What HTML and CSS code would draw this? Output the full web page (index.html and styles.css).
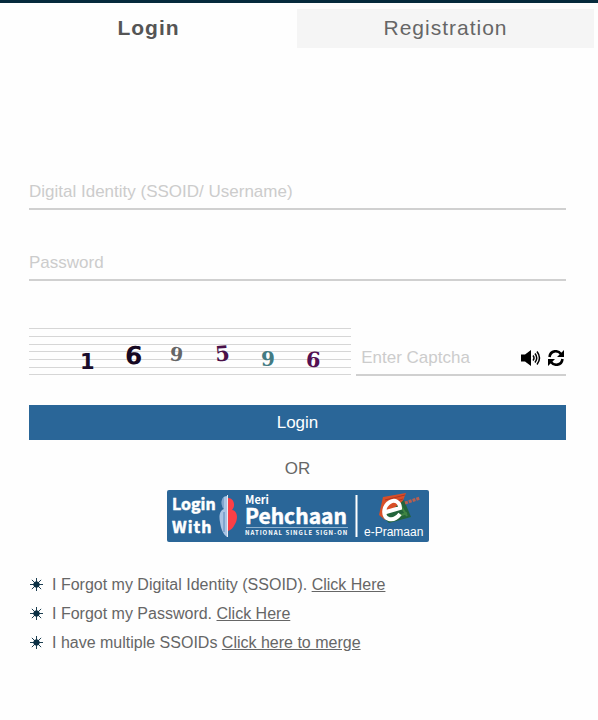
FILE: index.html
```html
<!DOCTYPE html>
<html lang="en">
<head>
  <meta charset="UTF-8">
  <meta name="viewport" content="width=device-width, initial-scale=1.0">
  <title>Login</title>
  <link rel="stylesheet" href="styles.css">
</head>
<body>
  <div class="tabs" role="tablist">
    <button type="button" class="tab active" role="tab" aria-selected="true">Login</button>
    <button type="button" class="tab" role="tab" aria-selected="false">Registration</button>
  </div>

  <main class="content">
    <form class="login-form">
      <input class="field" type="text" name="username" aria-label="Digital Identity (SSOID/ Username)" placeholder="Digital Identity (SSOID/ Username)">
      <input class="field" type="password" name="password" aria-label="Password" placeholder="Password">

      <div class="captcha-row">
        <svg class="captcha" viewBox="0 0 322 48" role="img" aria-label="Captcha">
          <path d="M0 .5H322M0 8.500H322M0 16.500H322M0 23.500H322M0 31.500H322M0 39.500H322M0 46.500H322" stroke="#d6d6d6"/>
          <g font-weight="bold">
            <text x="51" y="41" font-family="DejaVu Sans, sans-serif" font-size="21" fill="#1a0d2b">1</text>
            <text x="96" y="36" font-family="DejaVu Sans, sans-serif" font-size="25" fill="#160822" transform="rotate(4 104 28)">6</text>
            <text x="141" y="33" font-family="DejaVu Serif, serif" font-size="19" fill="#666" transform="rotate(6 148 25)">9</text>
            <text x="186" y="33" font-family="DejaVu Serif, serif" font-size="21" fill="#4a1048" transform="rotate(-5 193 25)">5</text>
            <text x="232" y="38" font-family="DejaVu Serif, serif" font-size="20" fill="#437b83">9</text>
            <text x="277" y="39" font-family="DejaVu Serif, serif" font-size="21" fill="#541052" transform="rotate(4 284 30)">6</text>
          </g>
        </svg>
        <div class="captcha-entry">
          <input class="captcha-input" type="text" name="captcha" aria-label="Enter Captcha" placeholder="Enter Captcha">
          <button type="button" class="icon-btn" aria-label="Play captcha audio">
            <svg width="20" height="16" viewBox="0 0 20 16">
              <path d="M0 4.500h4L10 0v16l-6-4.500H0z"/>
              <path d="M12 5.500q2 2.500 0 5M14 3.500q3.500 4.500 0 9M16 1.500q5 6.500 0 13" fill="none" stroke="#000" stroke-width="1.500"/>
            </svg>
          </button>
          <button type="button" class="icon-btn" aria-label="Refresh captcha">
            <svg width="16" height="16" viewBox="0 0 16 16">
              <path d="M1.500 7C2.500 0 10 0 13 4M14.500 9C13.500 16 6 16 3 12" fill="none" stroke="#000" stroke-width="2.600"/>
              <path d="M16 0v7H9zM0 16V9h7z"/>
            </svg>
          </button>
        </div>
      </div>

      <button type="submit" class="login-btn">Login</button>
    </form>

    <p class="or">OR</p>

    <a class="pehchaan" href="#" aria-label="Login with Meri Pehchaan, e-Pramaan">
      <svg width="262" height="52" viewBox="0 0 262 52">
        <rect width="262" height="52" rx="2" fill="#2a6698"/>
        <g fill="#fff" font-family="Noto Sans CJK JP, sans-serif" font-weight="bold">
          <g stroke="#fff" stroke-width=".5">
            <text x="5" y="20" font-size="16">Login</text>
            <text x="5" y="43" font-size="16" letter-spacing="1">With</text>
            <text x="78" y="34" font-size="21">Pehchaan</text>
          </g>
          <text x="78" y="14" font-size="11">Meri</text>
          <text x="78" y="45" font-size="6" letter-spacing="1">NATIONAL SINGLE SIGN-ON</text>
        </g>
        <path d="M79 37.500H181" stroke="#8eb2cf"/>
        <path d="M60 6c-6 0-7 9-3 13-5 2-5 8-4 13 1 7 3 12 7 15z" fill="#a9c4e4"/>
        <path d="M56 8v10M57 22v20" stroke="#5b86b9"/>
        <path d="M61 8c6 0 8 8 4 12 6 1 6 9 3 14-2 4-4 6-7 7z" fill="#fb3f46"/>
        <path d="M60.500 5V47" stroke="#e5ebf4"/>
        <path d="M189.500 5V47" stroke="#fff" stroke-width="2"/>
        <path d="M216 7l23-4-4 10-17 17-6-5z" fill="#d84f28"/>
        <path d="M237 10l7 17-22 6-6-6z" fill="#23643b"/>
        <path d="M218 10l20-5M222 13l14-4" stroke="#ad3524"/>
        <path d="M226 28l14-5M234 16l6 10" stroke="#408443" stroke-width="2"/>
        <path d="M238 13l15-5" stroke="#b95f50" stroke-width="3" stroke-dasharray="3 1"/>
        <path d="M219 22l14-4c0-6-5-9-10-6-7 4-8 15-1 17 4 1 8-1 11-5" fill="none" stroke="#fff" stroke-width="4"/>
        <text x="197" y="46" fill="#fff" font-family="Liberation Sans, Arial, sans-serif" font-size="12">e-Pramaan</text>
      </svg>
    </a>

    <ul class="help">
      <li><svg class="bullet" viewBox="0 0 14 14"><path d="M7 0v14M0 7h14M2 2l10 10M12 2L2 12"/><circle cx="7" cy="7" r="3"/></svg><span>I Forgot my Digital Identity (SSOID). <a href="#">Click Here</a></span></li>
      <li><svg class="bullet" viewBox="0 0 14 14"><path d="M7 0v14M0 7h14M2 2l10 10M12 2L2 12"/><circle cx="7" cy="7" r="3"/></svg><span>I Forgot my Password. <a href="#">Click Here</a></span></li>
      <li><svg class="bullet" viewBox="0 0 14 14"><path d="M7 0v14M0 7h14M2 2l10 10M12 2L2 12"/><circle cx="7" cy="7" r="3"/></svg><span>I have multiple SSOIDs <a href="#">Click here to merge</a></span></li>
    </ul>
  </main>
</body>
</html>
```
FILE: styles.css
```css
* {
  box-sizing: border-box;
}
body {
  margin: 0;
  border-top: 3px solid #062a3c;
  background: #fefefe;
  color: #666;
  font-family: "Liberation Sans", Arial, sans-serif;
  font-size: 16px;
}
button, input {
  font-family: inherit;
  border: none;
  border-radius: 0;
  outline: none;
}
.tabs {
  display: flex;
  padding: 6px 4px 0 0;
}
.tab {
  flex: 1;
  height: 39px;
  padding: 0 0 1px;
  background: transparent;
  color: #666;
  font-size: 21px;
  letter-spacing: 1px;
  cursor: pointer;
}
.tab:not(.active) {
  background: #f5f5f5;
}
.tab.active {
  color: #555;
  font-weight: bold;
}
.content {
  padding: 126px 32px 0 29px;
}
.login-form {
  display: flex;
  flex-direction: column;
}
.field {
  width: 100%;
  height: 36px;
  margin-bottom: 35px;
  padding: 2px 0 0;
  background: transparent;
  border-bottom: 2px solid #d0d0d0;
  font-size: 17px;
}
input::placeholder {
  color: #ccc;
  opacity: 1;
}
.captcha-row {
  display: flex;
  align-items: flex-end;
  gap: 5px;
  margin: 12px 0 29px;
}
.captcha {
  flex: 0 0 60%;
  min-width: 0;
}
.captcha-entry {
  flex: 1;
  display: flex;
  align-items: center;
  gap: 7px;
  min-width: 0;
  height: 36px;
  padding: 2px 2px 0 5px;
  border-bottom: 2px solid #d0d0d0;
}
.captcha-input {
  flex: 1;
  min-width: 0;
  padding: 0;
  background: transparent;
  font-size: 17px;
}
.icon-btn {
  display: flex;
  padding: 0;
  background: transparent;
  cursor: pointer;
}
.login-btn {
  height: 35px;
  background: #2a6698;
  color: #fff;
  font-size: 17px;
  cursor: pointer;
}
.or {
  margin: 18px 0 11px;
  font-size: 17px;
  line-height: 21px;
  text-align: center;
}
.pehchaan {
  display: block;
  width: fit-content;
  margin: 0 auto;
}
.pehchaan svg {
  display: block;
}
.help {
  margin: 28px 0 0;
  padding: 0;
  list-style: none;
}
.help li {
  display: flex;
  align-items: center;
  gap: 9px;
  padding-left: 1px;
  line-height: 29px;
}
.help a {
  color: inherit;
}
.bullet {
  width: 13px;
  height: 13px;
  fill: #0b3044;
  stroke: #0b3044;
}
```
